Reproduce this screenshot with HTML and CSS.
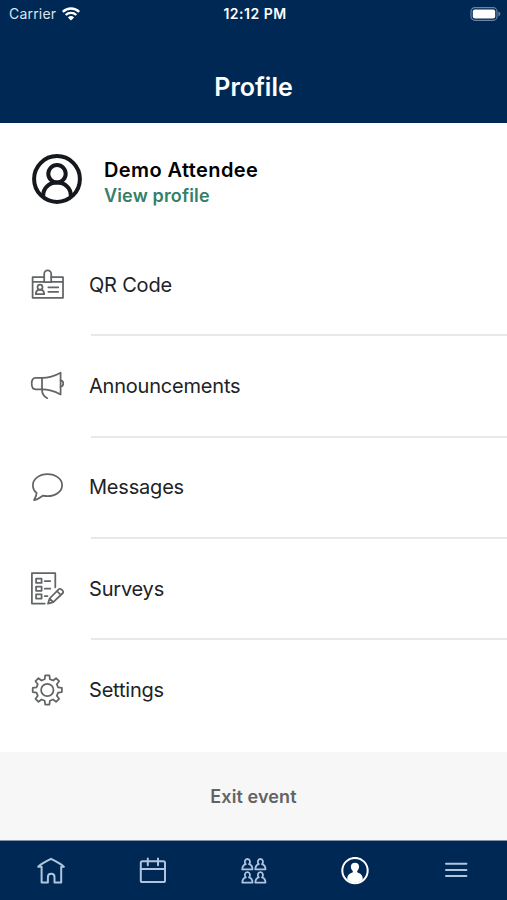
FILE: index.html
```html
<!DOCTYPE html>
<html lang="en">
<head>
  <meta charset="utf-8">
  <meta name="viewport" content="width=device-width, initial-scale=1">
  <title>Profile</title>
  <link rel="stylesheet" href="styles.css">
</head>
<body>
  <div id="app">
    <header class="header">
      <div class="status-bar">
        <div class="carrier">
          <span>Carrier</span>
          <svg width="18" height="14" viewBox="0 0 18 14">
            <path d="M.8 4.800a12 12 0 0 1 16.400 0" />
            <path d="M3.700 8a7.600 7.600 0 0 1 10.600 0" />
            <path class="fill" d="M9 13.600L5.900 10.400a4.500 4.500 0 0 1 6.200 0z" />
          </svg>
        </div>
        <div class="clock">12:12 PM</div>
        <svg class="battery" width="31" height="14" viewBox="0 0 31 14">
          <rect class="shell" x="1" y=".7" width="26" height="12.6" rx="3.8" />
          <rect class="charge" x="2.8" y="2.6" width="22.4" height="8.8" rx="2" />
          <path class="nub" d="M28.4 4.6c2.6.9 2.6 3.9 0 4.8z" />
        </svg>
      </div>
      <h1 class="title">Profile</h1>
    </header>

    <main class="content">
      <a class="account">
        <svg class="avatar" width="50" height="50" viewBox="0 0 50 50">
          <circle cx="25" cy="25" r="22.9" />
          <circle cx="25" cy="19.7" r="8.7" />
          <path d="M11.2 43v-1.6c0-7.6 6-12.8 13.8-12.8s13.8 5.2 13.8 12.8V43" />
        </svg>
        <div class="account-text">
          <div class="account-name">Demo Attendee</div>
          <div class="account-link">View profile</div>
        </div>
      </a>

      <nav class="menu">
        <a class="menu-item">
          <svg class="icon" viewBox="0 0 34 34">
            <path d="M14 9.2H2.600v20.600H33V9.200H21.200M2.600 13.800H14M21.200 13.800H33" />
            <path d="M14.200 14.200V5.900a3.500 3.500 0 0 1 7 0v8.300z" />
            <circle cx="10" cy="19.200" r="2.500" />
            <path d="M5.800 26.200c0-2.600 1-4 2.800-4.400h2.800c1.800.4 2.800 1.800 2.800 4.400z" />
            <path d="M18.300 19.300h9.900M18.300 23.800h9.900" />
          </svg>
          <span class="label">QR Code</span>
        </a>
        <a class="menu-item">
          <svg class="icon" viewBox="0 0 34 34">
            <path d="M12 8.900H5.600C3 8.900 1.700 11.300 1.700 14.600s1.300 5.800 3.900 5.800H12z" />
            <path d="M12 8.900c7 0 12.500-1.800 18.600-5.200v21.700C24.500 22.200 19 20.400 12 20.400" />
            <path d="M30.600 11.400c1.700.2 2.700 1.500 2.700 3.100s-1 2.900-2.700 3.100M12 20.400c0 4 1.800 7 5.200 8.800" />
          </svg>
          <span class="label">Announcements</span>
        </a>
        <a class="menu-item">
          <svg class="icon" viewBox="0 0 34 34">
            <path d="M6.600 23C4.200 21 2.900 18.200 2.900 15.200 2.900 9 9.300 4.200 17.500 4.200s14.600 4.800 14.600 11-6.400 11-14.600 11c-1.700 0-3.200-.2-4.700-.5-2.600 1.700-5 4.200-8.300 4.500-1.400 0 2-2.800 2.100-7.200z" />
          </svg>
          <span class="label">Messages</span>
        </a>
        <a class="menu-item">
          <svg class="icon" viewBox="0 0 34 34">
            <path d="M25.300 15.300V1.200H1.900v30.400h12.800" />
            <path d="M6.100 6.700h5.500v4.200H6.100zM6.100 14.600h5.500v4.200H6.100zM6.100 22.400h5.500v4.200H6.100z" />
            <path d="M14.700 9h5.600M14.700 16.700h5.600M14.700 24h2.800" />
            <path d="M18 31.700l1.600-5.200 9.300-9.300c1.300-1.300 5.500 2 4 3.800l-9.600 9.200zM19.600 26.500l3.700 3.700M27 19.100l3.900 3.900" />
          </svg>
          <span class="label">Surveys</span>
        </a>
        <a class="menu-item">
          <svg class="icon" viewBox="-17.3 -17 34 34">
            <path d="M-2.600-10.800L-2.100-14.600H2.100L2.600-10.800 5.800-9.500 8.800-11.800 11.800-8.800 9.500-5.800 10.800-2.600 14.600-2.100V2.100L10.800 2.600 9.500 5.800 11.800 8.800 8.800 11.800 5.800 9.500 2.600 10.800 2.100 14.600H-2.100L-2.600 10.800-5.800 9.500-8.800 11.800-11.800 8.800-9.500 5.800-10.800 2.600-14.600 2.100V-2.100L-10.800-2.600-9.500-5.800-11.800-8.800-8.800-11.800-5.800-9.500z" />
            <circle r="6.200" />
          </svg>
          <span class="label">Settings</span>
        </a>
      </nav>
    </main>

    <button class="exit-button">Exit event</button>

    <nav class="tab-bar">
      <a class="tab">
        <svg viewBox="0 0 28 28">
          <path d="M4.600 9.800H1.200c3.600-3.600 8.200-5.400 12.800-8 4.600 2.600 9.200 4.400 12.800 8h-2.600V25.600h-6.700v-5.400c0-4.600-6.600-4.600-6.600 0v5.400H4.600z" />
        </svg>
      </a>
      <a class="tab">
        <svg viewBox="0 0 28 28">
          <rect x="2.800" y="4.300" width="24.200" height="20.700" rx="1.600" />
          <path d="M2.800 12H27M9.800 1.500v6.800M20 1.500v6.800" />
        </svg>
      </a>
      <a class="tab">
        <svg class="people" viewBox="0 0 28 28">
          <path id="person" d="M6.800 7.200C4.900 5.600 5.800 2 8.400 2s3.500 3.600 1.600 5.200c2.300.5 3.400 2.300 3.500 5.200H3.300c.1-2.900 1.200-4.700 3.500-5.200z" />
          <use href="#person" x="13" />
          <use href="#person" y="13.200" />
          <use href="#person" x="13" y="13.200" />
        </svg>
      </a>
      <a class="tab active">
        <svg viewBox="0 0 28 28">
          <circle cx="14" cy="13.600" r="12.700" />
          <path class="fill" d="M6.200 22.300c.2-4.300 2-5.800 5.100-6.800.9-.4.700-1.200 0-2C8.200 9.200 10.600 5.800 14 5.800s5.800 3.400 2.700 7.700c-.7.8-.9 1.600 0 2 3.100 1 4.900 2.500 5.100 6.800-4.500 4.600-11.100 4.600-15.600 0z" />
        </svg>
      </a>
      <a class="tab">
        <svg viewBox="0 0 28 28">
          <path d="M4 6.800h20.400M4 12.900h20.400M4 19h20.400" />
        </svg>
      </a>
    </nav>
  </div>
</body>
</html>
```
FILE: styles.css
```css
/* Base styles */
* {
  box-sizing: border-box;
}

body {
  margin: 0;
  font-family: Inter, "Liberation Sans", sans-serif;
  color: #202226;
  background: #fff;
}

svg {
  display: block;
  flex: none;
  fill: none;
  stroke-linecap: round;
  stroke-linejoin: round;
}

#app {
  display: flex;
  flex-direction: column;
  height: 900px;
}

/* Header */
.header {
  height: 123px;
  color: #fff;
  background: #002855;
}

.status-bar {
  display: grid;
  grid-template-columns: 1fr auto 1fr;
  align-items: center;
  height: 27px;
  padding: 0 6px 0 9px;
  font-size: 14px;
  line-height: 27px;
}

.carrier {
  display: flex;
  align-items: center;
  gap: 6px;
  color: #dce4ec;
  letter-spacing: 0.2px;
}

.carrier svg {
  stroke: #fff;
  stroke-width: 2.4;
  stroke-linecap: butt;
}

.carrier .fill {
  fill: #fff;
  stroke: none;
}

.clock {
  font-weight: 600;
  letter-spacing: 0.5px;
}

.battery {
  justify-self: end;
}

.battery .shell {
  stroke: #6b84a0;
  stroke-width: 1.2;
}

.battery .charge {
  fill: #fff;
}

.battery .nub {
  fill: #6b84a0;
}

.title {
  margin: 44px 0 0;
  font-size: 25px;
  line-height: 32px;
  font-weight: 600;
  text-align: center;
}

/* Account */
.content {
  flex: 1;
}

.account {
  display: flex;
  align-items: center;
  gap: 22px;
  height: 112px;
  padding: 0 32px 1px;
}

.avatar {
  stroke: #15191d;
  stroke-width: 4;
  stroke-linecap: butt;
}

.account-text {
  padding-top: 7px;
}

.account-name {
  font-size: 20px;
  line-height: 26px;
  font-weight: 600;
  letter-spacing: 0.4px;
  color: #000;
}

.account-link {
  font-size: 18px;
  line-height: 25px;
  font-weight: 600;
  letter-spacing: 0.15px;
  color: #358067;
}

/* Menu */
.menu-item {
  display: flex;
  align-items: center;
  height: 101.3px;
  padding-left: 30px;
  border-bottom: 2px solid transparent;
}

.menu-item:not(:last-child) {
  border-image: linear-gradient(to right, transparent 92.5px, #e8e8e8 92.5px) 2;
}

.icon {
  width: 34px;
  height: 34px;
  margin-right: 25px;
  stroke: #626466;
  stroke-width: 1.75;
}

.label {
  font-size: 20px;
  letter-spacing: -0.2px;
}

/* Footer */
.exit-button {
  height: 88px;
  padding: 0;
  border: none;
  font: 600 18px Inter, "Liberation Sans", sans-serif;
  letter-spacing: 0.1px;
  color: #636363;
  background: #f7f7f7;
}

.tab-bar {
  display: grid;
  grid-template-columns: repeat(5, 1fr);
  height: 60px;
  border-top: 1px solid #7f93aa;
  background: #002855;
}

.tab {
  display: flex;
  justify-content: center;
  padding-top: 16px;
}

.tab svg {
  width: 28px;
  height: 28px;
  stroke: #afc4dd;
  stroke-width: 2;
}

.tab .people {
  stroke-width: 1.8;
}

.tab.active svg {
  stroke: #fff;
}

.tab .fill {
  fill: #fff;
  stroke: none;
}
```
